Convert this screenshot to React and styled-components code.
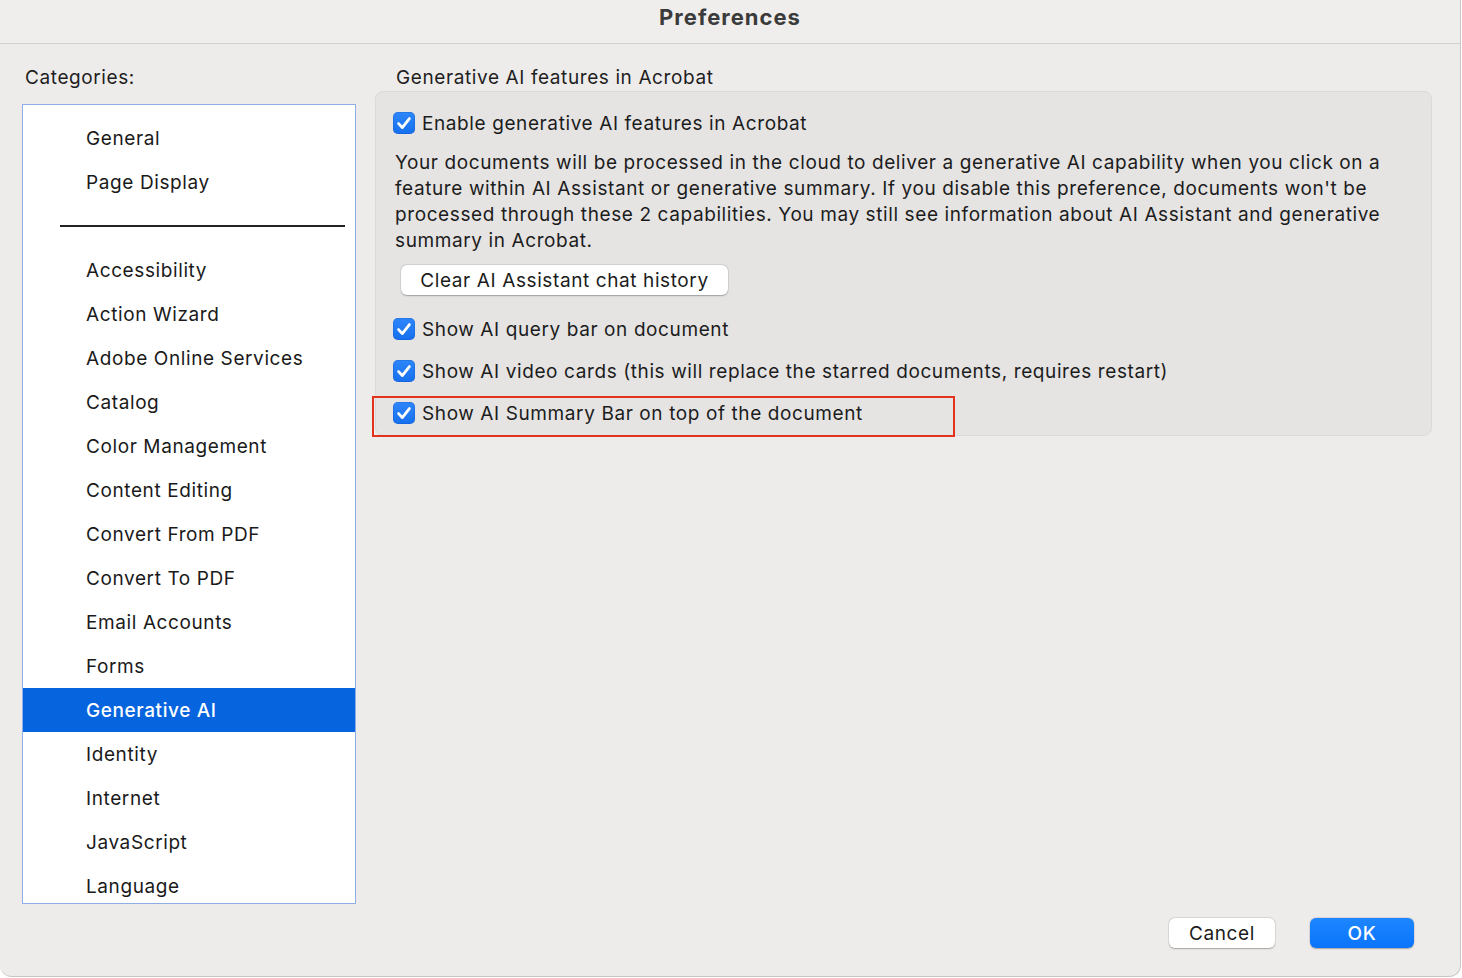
import styled, { createGlobalStyle } from "styled-components"

const GlobalStyle = createGlobalStyle`
	html, body {
		margin: 0;
		padding: 0;
		background: #ffffff;
	}
	body {
		font-family: Inter, "Noto Sans", "DejaVu Sans", sans-serif;
		color: #1c1c1c;
		-webkit-font-smoothing: antialiased;
	}
`

const categories = [
	"General",
	"Page Display",
	"---",
	"Accessibility",
	"Action Wizard",
	"Adobe Online Services",
	"Catalog",
	"Color Management",
	"Content Editing",
	"Convert From PDF",
	"Convert To PDF",
	"Email Accounts",
	"Forms",
	"Generative AI",
	"Identity",
	"Internet",
	"JavaScript",
	"Language",
]

const CheckIcon = () => (
	<svg width="22" height="22" viewBox="0 0 22 22">
		<path d="M5.6 11.6 L9.3 15.6 L16.4 6.6" fill="none" stroke="#fff" strokeWidth="2.8" strokeLinecap="round" strokeLinejoin="round" />
	</svg>
)

const CheckRow = ({ children, highlight }) => (
	<Row>
		<Box>
			<CheckIcon />
		</Box>
		<Label>{children}</Label>
		{highlight && <Highlight />}
	</Row>
)

const App = () => {
	return (
		<>
			<GlobalStyle />
			<Window>
				<TitleBar>Preferences</TitleBar>
				<Main>
					<LeftColumn>
						<Heading>Categories:</Heading>
						<CategoryList>
							{categories.map((name, i) =>
								name === "---" ? (
									<SeparatorRow key={i}>
										<Rule />
									</SeparatorRow>
								) : (
									<Category key={i} $active={name === "Generative AI"}>
										{name}
									</Category>
								)
							)}
						</CategoryList>
					</LeftColumn>
					<RightColumn>
						<Heading $indent>Generative AI features in Acrobat</Heading>
						<Group>
							<CheckRow>Enable generative AI features in Acrobat</CheckRow>
							<Paragraph>
								Your documents will be processed in the cloud to deliver a generative AI capability when you click on a
								<br />
								feature within AI Assistant or generative summary. If you disable this preference, documents won't be
								<br />
								processed through these 2 capabilities. You may still see information about AI Assistant and generative
								<br />
								summary in Acrobat.
							</Paragraph>
							<PushButton $width={327}>Clear AI Assistant chat history</PushButton>
							<Options>
								<CheckRow>Show AI query bar on document</CheckRow>
								<CheckRow>Show AI video cards (this will replace the starred documents, requires restart)</CheckRow>
								<CheckRow highlight>Show AI Summary Bar on top of the document</CheckRow>
							</Options>
						</Group>
					</RightColumn>
				</Main>
				<Footer>
					<PushButton $width={106}>Cancel</PushButton>
					<PushButton $width={104} $primary>
						OK
					</PushButton>
				</Footer>
			</Window>
		</>
	)
}

const Window = styled.div`
	width: 1461px;
	height: 977px;
	box-sizing: border-box;
	background: #eeeceb;
	border-right: 1px solid #c9c7c6;
	border-bottom: 1px solid #c9c7c6;
	border-radius: 0 0 12px 12px;
	display: flex;
	flex-direction: column;
	overflow: hidden;
	font-size: 19px;
	letter-spacing: 0.6px;
`

const TitleBar = styled.div`
	height: 44px;
	flex-shrink: 0;
	background: #f0eeed;
	border-bottom: 1px solid #d3d1d0;
	display: flex;
	align-items: center;
	justify-content: center;
	padding-bottom: 10px;
	box-sizing: border-box;
	font-size: 22px;
	font-weight: 700;
	color: #3b3b3b;
	letter-spacing: 1px;
`

const Main = styled.div`
	display: flex;
	gap: 19px;
	padding: 22px 0 0 22px;
`

const LeftColumn = styled.div`
	width: 334px;
	display: flex;
	flex-direction: column;
	gap: 14px;
`

const RightColumn = styled.div`
	width: 1057px;
	display: flex;
	flex-direction: column;
	gap: 1px;
`

const Heading = styled.div`
	line-height: 24px;
	padding-left: ${(p) => (p.$indent ? "21px" : "3px")};
	color: #1e1e1e;
`

const CategoryList = styled.div`
	height: 800px;
	box-sizing: border-box;
	background: #ffffff;
	border: 1px solid #8eafe6;
	padding-top: 11px;
	overflow: hidden;
`

const Category = styled.div`
	height: 44px;
	display: flex;
	align-items: center;
	padding-left: 63px;
	color: ${(p) => (p.$active ? "#ffffff" : "#1a1a1a")};
	background: ${(p) => (p.$active ? "#0664de" : "transparent")};
	font-weight: ${(p) => (p.$active ? 500 : 400)};
`

const SeparatorRow = styled.div`
	height: 44px;
	display: flex;
	align-items: center;
	padding: 0 10px 0 37px;
`

const Rule = styled.div`
	flex: 1;
	height: 2px;
	background: #222222;
`

const Group = styled.div`
	box-sizing: border-box;
	height: 345px;
	background: #e5e4e3;
	border: 1px solid #dcdad9;
	border-radius: 8px;
	padding: 19px 17px 0 17px;
	display: flex;
	flex-direction: column;
	align-items: flex-start;
`

const Row = styled.div`
	position: relative;
	height: 24px;
	display: flex;
	align-items: center;
	gap: 7px;
`

const Box = styled.div`
	width: 22px;
	height: 22px;
	border-radius: 5px;
	background: linear-gradient(#2d86fa, #1670ee);
	box-shadow: inset 0 0 0 0.5px rgba(0, 60, 160, 0.35);
	display: flex;
	align-items: center;
	justify-content: center;
	flex-shrink: 0;
`

const Label = styled.span`
	white-space: nowrap;
	color: #1c1c1c;
`

const Highlight = styled.div`
	position: absolute;
	left: -21px;
	top: -5px;
	width: 583px;
	height: 41px;
	box-sizing: border-box;
	border: 2px solid #e3321e;
	pointer-events: none;
`

const Paragraph = styled.p`
	margin: 15px 0 0 2px;
	line-height: 26px;
	white-space: nowrap;
	color: #1c1c1c;
`

const PushButton = styled.div`
	width: ${(p) => p.$width}px;
	height: 30px;
	box-sizing: border-box;
	border-radius: 6px;
	display: flex;
	align-items: center;
	justify-content: center;
	background: ${(p) => (p.$primary ? "linear-gradient(#1d86ff, #0a74fb)" : "#ffffff")};
	color: ${(p) => (p.$primary ? "#ffffff" : "#1c1c1c")};
	font-weight: ${(p) => (p.$primary ? 500 : 400)};
	box-shadow: 0 0.5px 1.5px rgba(0, 0, 0, 0.28), 0 0 0 0.5px rgba(0, 0, 0, 0.08);

	${Group} & {
		margin: 11px 0 0 8px;
	}
`

const Options = styled.div`
	margin-top: 22px;
	display: flex;
	flex-direction: column;
	gap: 18px;
`

const Footer = styled.div`
	margin-top: auto;
	display: flex;
	justify-content: flex-end;
	gap: 35px;
	padding: 0 46px 28px 0;
`

export default App
